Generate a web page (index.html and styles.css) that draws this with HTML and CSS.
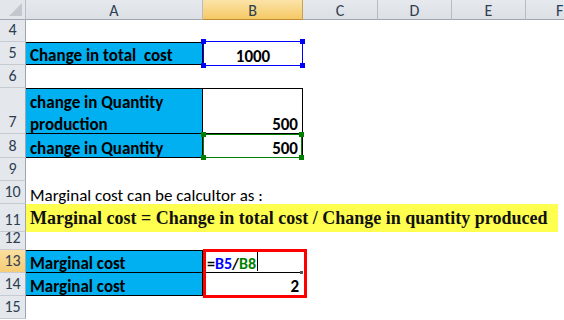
FILE: index.html
```html
<!DOCTYPE html>
<html>
<head>
<meta charset="utf-8">
<link rel="stylesheet" href="styles.css">
</head>
<body>
<div class="sheet">
  <div class="corner"><span class="tri"></span></div>
  <div class="ch">A</div>
  <div class="ch sel">B</div>
  <div class="ch">C</div>
  <div class="ch">D</div>
  <div class="ch">E</div>
  <div class="ch last">F</div>

  <div class="rh r4">4</div>
  <div class="rh r5">5</div>
  <div class="rh r6">6</div>
  <div class="rh r7">7</div>
  <div class="rh r8">8</div>
  <div class="rh r9">9</div>
  <div class="rh r10">10</div>
  <div class="rh r11">11</div>
  <div class="rh r12">12</div>
  <div class="rh r13 hl">13</div>
  <div class="rh r14">14</div>
  <div class="rh r15">15</div>

  <div class="cell blue bt bb br r5 ca">Change in total&nbsp; cost</div>
  <div class="cell num center r5 cb">1000<span class="rf rf-blue"><i class="h tl"></i><i class="h tr"></i><i class="h bl"></i><i class="h br2"></i></span></div>

  <div class="cell blue bt bb br wrap r7 ca"><span class="wraptext">change in Quantity production</span></div>
  <div class="cell num right bt bb br r7 cb">500</div>

  <div class="cell blue bb br r8 ca">change in Quantity</div>
  <div class="cell num right bb br r8 cb">500<span class="rf rf-green"><i class="h tl"></i><i class="h tr"></i><i class="h bl"></i><i class="h br2"></i></span></div>

  <div class="cell plain r10 ca">Marginal cost can be calcultor as :</div>
  <div class="yellow r11">Marginal cost = Change in total cost / Change in quantity produced</div>

  <div class="cell blue bt bb br r13 ca">Marginal cost</div>
  <div class="cell num formula bb r13 cb"><span class="f-eq">=</span><span class="f-b">B5</span><span class="f-eq">/</span><span class="f-g">B8</span><span class="caret"></span><span class="dot"></span></div>

  <div class="cell blue bb br r14 ca">Marginal cost</div>
  <div class="cell num right bb r14 cb">2</div>

  <div class="redbox"></div>
</div>
</body>
</html>
```
FILE: styles.css
```css
* { box-sizing: border-box; }
html, body { margin: 0; padding: 0; background: #fff; }
body { width: 564px; height: 320px; overflow: hidden; }

.sheet {
  display: grid;
  grid-template-columns: 26px 177px 100px 75px 74px 74px 1fr;
  grid-template-rows: 20px 22px 23px 23px 46px 24px 23px 23px 28px 18px 23px 23px 23px 1fr;
  width: 564px;
  height: 320px;
  font-family: "Carlito", "Lato", "Liberation Sans", sans-serif;
}

.corner {
  grid-row: 1; grid-column: 1;
  background: #e3e7ec;
  border-right: 1px solid #b9bfc8;
  border-bottom: 1px solid #9da6b1;
  position: relative;
}
.tri {
  position: absolute; right: 3px; bottom: 3px;
  width: 0; height: 0;
  border-left: 13px solid transparent;
  border-bottom: 13px solid #c3c8cf;
}

.ch {
  grid-row: 1;
  background: linear-gradient(#e6e9ed, #dcdfe4);
  border-right: 1px solid #b6bcc5;
  border-bottom: 1px solid #9da6b1;
  color: #2e3d50;
  font-size: 16px;
  display: flex; align-items: center; justify-content: center;
  padding-top: 1px;
}
.ch.sel {
  background: linear-gradient(#fbe3a8, #f5c965);
  border-right: 1px solid #c9a251;
  border-bottom: 1px solid #c28a30;
}
.ch.last { border-right: none; justify-content: flex-start; padding-left: 30px; overflow: hidden; }

.rh {
  grid-column: 1;
  background: #e4e8ed;
  border-right: 1px solid #9da6b1;
  border-bottom: 1px solid #c6cbd2;
  color: #2e3d50;
  font-size: 16px;
  display: flex; align-items: flex-end; justify-content: center;
  padding-bottom: 1px;
  line-height: 20px;
}
.rh.hl { background: linear-gradient(#fbdfa0, #f5cd75); }

.r4 { grid-row: 2; } .r5 { grid-row: 3; } .r6 { grid-row: 4; } .r7 { grid-row: 5; }
.r8 { grid-row: 6; } .r9 { grid-row: 7; } .r10 { grid-row: 8; } .r11 { grid-row: 9; }
.r12 { grid-row: 10; } .r13 { grid-row: 11; } .r14 { grid-row: 12; } .r15 { grid-row: 13; }
.ca { grid-column: 2; } .cb { grid-column: 3; }

.cell {
  position: relative;
  display: flex; align-items: flex-end;
  font-size: 17px;
  line-height: 17px;
  padding: 0 4px 0 4px;
  color: #000;
  white-space: nowrap;
}
.blue { background: #00b0f0; font-weight: bold; }
.num { font-weight: bold; }
.center { justify-content: center; }
.right { justify-content: flex-end; }
.plain { overflow: visible; }
.wrap { white-space: normal; line-height: 22px; }
.wraptext { margin-bottom: -3px; }

.bt { border-top: 1px solid #000; }
.bb { border-bottom: 1px solid #000; }
.br { border-right: 1px solid #000; }

.rf {
  position: absolute;
  left: 0; top: -1px; right: 0; bottom: -1px;
  border: 1px solid #0000ff;
}
.rf-blue { border-color: #0000ff; }
.rf-green { border-color: #008000; top: 0; }
.h {
  position: absolute;
  width: 5px; height: 5px;
  background: #0000ff;
}
.rf-green .h { background: #008000; }
.h.tl { left: -3px; top: -3px; }
.h.tr { right: -3px; top: -3px; }
.h.bl { left: -3px; bottom: -3px; }
.h.br2 { right: -3px; bottom: -3px; }

.yellow {
  grid-column: 2 / 8;
  width: 532px;
  background: #ffff50;
  font-family: "Liberation Serif", "Times New Roman", serif;
  font-weight: bold;
  font-size: 18px;
  color: #111;
  display: flex; align-items: center;
  padding-left: 4px;
  white-space: nowrap;
}

.formula { font-size: 16px; }
.f-eq { color: #000; }
.f-b { color: #0000ff; }
.f-g { color: #008000; }
.caret {
  display: inline-block;
  width: 1px; height: 19px;
  background: #000;
  margin-left: 1px;
  align-self: center;
}
.dot {
  position: absolute; right: 0; bottom: -2px;
  width: 3px; height: 3px;
  background: #555;
}

.redbox {
  grid-column: 3;
  grid-row: 11 / 13;
  border: 3px solid #ff0000;
  margin: -1px -4px -2px 0;
  z-index: 2;
  pointer-events: none;
}
```
